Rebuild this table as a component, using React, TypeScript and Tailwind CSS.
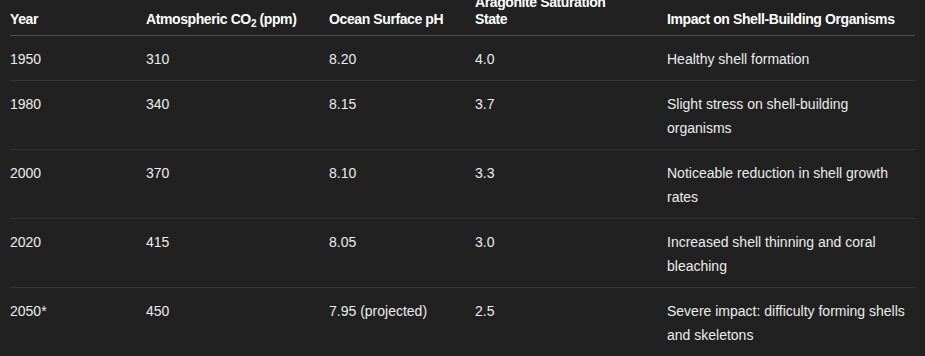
import type { ReactNode } from "react";

const rows: [string, string, string, string, string][] = [
  ["1950", "310", "8.20", "4.0", "Healthy shell formation"],
  ["1980", "340", "8.15", "3.7", "Slight stress on shell-building organisms"],
  ["2000", "370", "8.10", "3.3", "Noticeable reduction in shell growth rates"],
  ["2020", "415", "8.05", "3.0", "Increased shell thinning and coral bleaching"],
  ["2050*", "450", "7.95 (projected)", "2.5", "Severe impact: difficulty forming shells and skeletons"],
];

const headers: ReactNode[] = [
  "Year",
  <>
    Atmospheric CO<sub className="text-[10px] leading-none">2</sub> (ppm)
  </>,
  "Ocean Surface pH",
  <>
    Aragonite Saturation
    <br />
    State
  </>,
  "Impact on Shell-Building Organisms",
];

const widths = ["w-[136px]", "w-[183px]", "w-[146px]", "w-[192px]", "w-[248px]"];

export default function App() {
  return (
    <div className="h-[356px] overflow-hidden bg-[#212121] text-[#ececec] font-['Liberation_Sans',Arial,sans-serif]">
      <div className="-mt-[14px] pl-[10px]">
        <table className="table-fixed border-collapse text-left text-[14px]">
          <colgroup>
            {widths.map((w) => (
              <col key={w} className={w} />
            ))}
          </colgroup>
          <thead>
            <tr className="border-b border-[#4e4e4e]">
              {headers.map((h, i) => (
                <th
                  key={i}
                  className="pt-[8px] pb-[7px] pr-2 align-bottom font-bold leading-[17px] tracking-[-0.4px] text-white"
                >
                  {h}
                </th>
              ))}
            </tr>
          </thead>
          <tbody>
            {rows.map((r, i) => (
              <tr
                key={r[0]}
                className={i < rows.length - 1 ? "border-b border-[#353535]" : ""}
              >
                {r.map((c, j) => (
                  <td
                    key={j}
                    className={`pt-[11px] pb-[9px] align-top leading-[24px] ${j === 4 ? "pr-0" : "pr-2"}`}
                  >
                    {c}
                  </td>
                ))}
              </tr>
            ))}
          </tbody>
        </table>
      </div>
    </div>
  );
}
